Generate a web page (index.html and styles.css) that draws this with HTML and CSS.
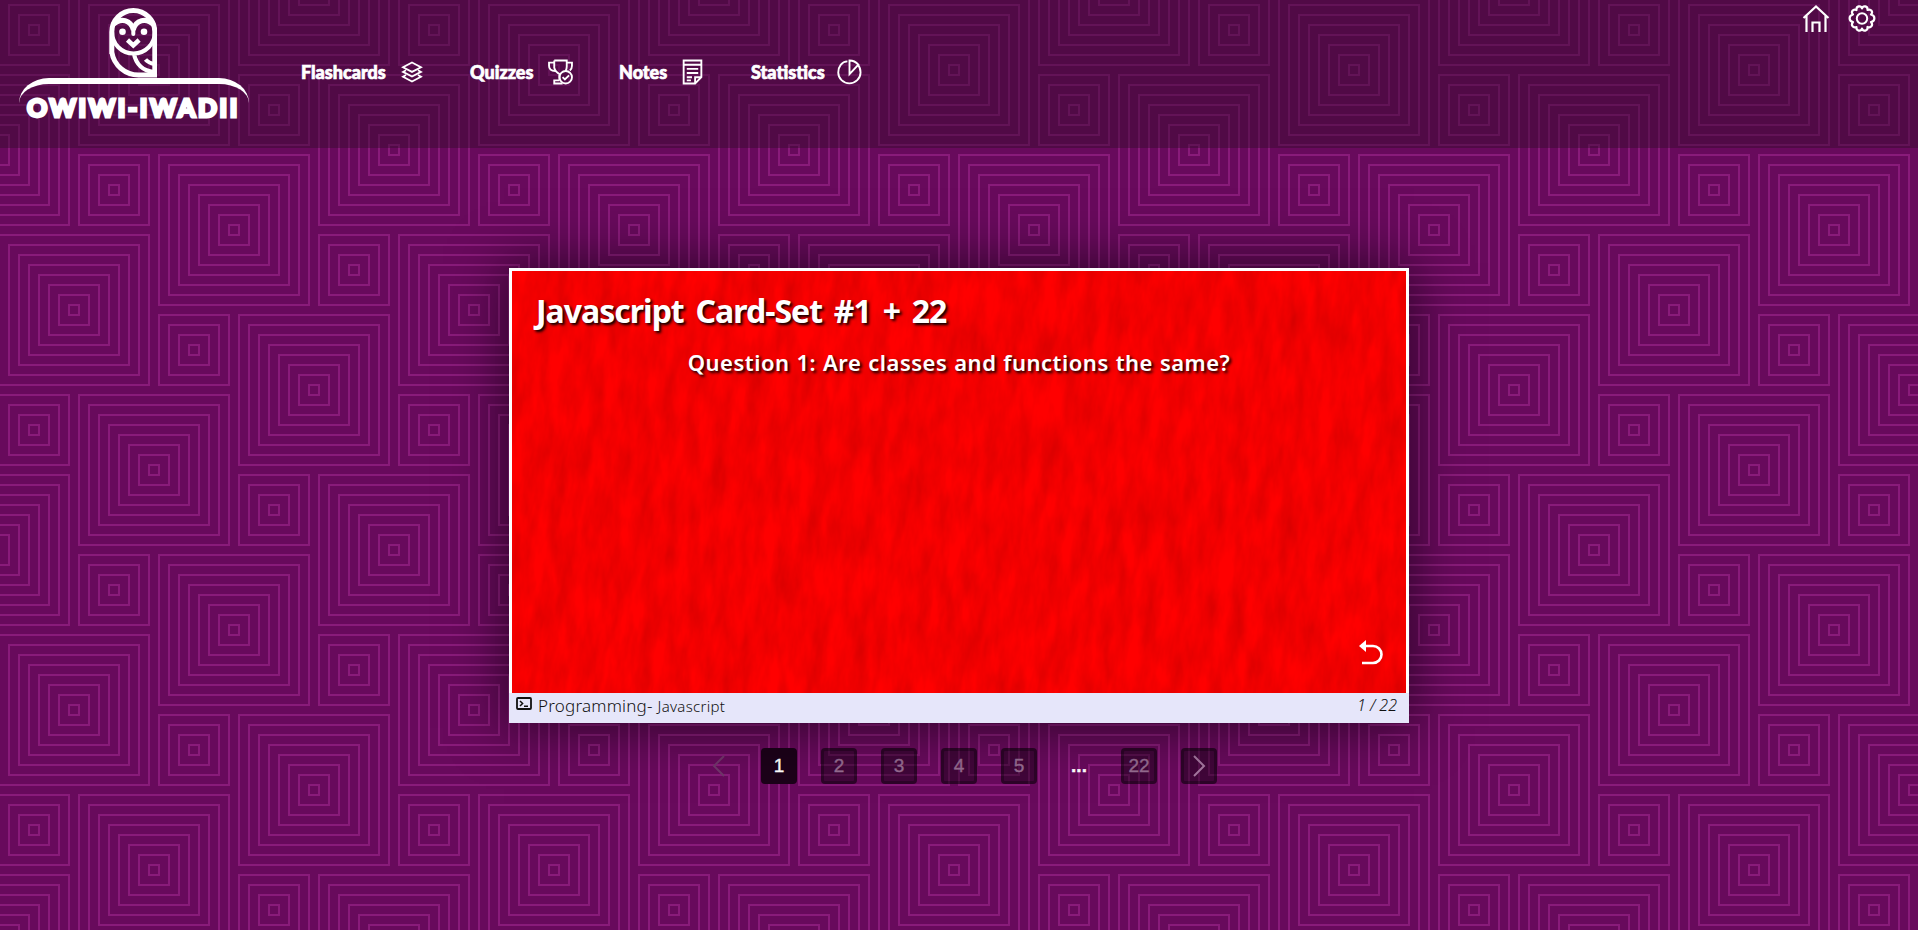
FILE: index.html
```html
<!DOCTYPE html>
<html lang="en">
<head>
<meta charset="utf-8">
<title>Owiwi-Iwadii</title>
<link rel="stylesheet" href="styles.css">
</head>
<body>
<header class="header">
  <div class="logo">
    <svg class="owl" viewBox="0 0 48 70" fill="none" stroke="#fff" stroke-width="5">
      <path d="M2.800 46V24a21.500 21.500 0 0 1 43 0v43H30A27 27 0 0 1 2.800 44V24"/>
      <path d="M3.500 17C12 9 22 12 24.300 22C26.500 12 37 9 45 17" />
      <path d="M3 24a21.500 21.500 0 0 0 43 0M25 46c2 10 9 17 20 18M36.500 51.500q3 3.500 9 4.500" stroke-width="4.200"/>
      <path d="m18.500 32 5.800 5.500 5.800-5.500" stroke-width="4.500"/>
      <path d="M24.300 18v8" stroke-width="4" stroke-linecap="round"/>
      <circle cx="13.500" cy="23.800" r="3.300" fill="#fff" stroke="none"/>
      <circle cx="35" cy="23.800" r="3.300" fill="#fff" stroke="none"/>
    </svg>
    <div class="brand">OWIWI-IWADII</div>
  </div>
  <nav class="nav">
    <a class="link"><span class="label w1">Flashcards</span>
      <svg width="24" height="24" viewBox="0 0 24 24"><path d="m12 2.500 9 4.700-9 4.700-9-4.700zM6 10.200l-3 1.700 9 4.700 9-4.700-3-1.700M6 15l-3 1.700 9 4.800 9-4.800-3-1.700"/></svg></a>
    <a class="link"><span class="label w2">Quizzes</span>
      <svg width="25" height="26" viewBox="0 0 24 24"><path d="M6 1h12v6q0 2-1 4M6 1v7q1 4 5 6v6M6 3H1v3q0 5 6 5M18 3h5v3q0 3-2 4.500M11 20H6v3h8"/><circle cx="17" cy="17" r="6"/><path d="m14 17 2.200 2.200 4-4"/></svg></a>
    <a class="link"><span class="label w3">Notes</span>
      <svg width="25" height="26" viewBox="0 0 24 24"><path d="M3.500 1h17v16l-6 6h-11zM3.500 5h17M6.500 9h11M6.500 13h11M6.500 17h5M6.500 20h4M14.500 23v-6h6"/></svg></a>
    <a class="link"><span class="label w4">Statistics</span>
      <svg width="25" height="26" viewBox="0 0 24 24"><path d="M10 1.800C4.500 2 1.200 7 1.200 12.500A10.700 10.400 0 0 0 22.600 12.500Q22.600 8 20 5M12 1v13l8.500-9q-3.500-4-8.500-4z"/></svg></a>
  </nav>
  <div class="tools">
    <svg width="28" height="28" viewBox="0 0 28 28"><path d="M1.500 13 14 1.500 26.500 13M4.500 10.500V27M23.500 10.500V27M10.500 27v-9.500h7V27" stroke-width="2.200"/></svg>
    <svg width="28" height="28" viewBox="0 0 28 28" stroke-linejoin="round"><circle cx="14" cy="13.500" r="5.200" stroke-width="2"/><path stroke-width="2.200" d="M14 3.500c1-3.500 6-2.500 5.500 1.500 3.500-1.500 6 2 3.500 4.500 4.500 1 4.500 6.500 0 7.500 2.500 3 0 6.500-3.500 5 .5 4-4.500 5-5.500 1.500-1 3.500-6 2.500-5.500-1.500-3.500 1.500-6-2-3.500-5-4.500-1-4.500-6.500 0-7.500C2.500 7 5 3.500 8.500 5 8 1 13 0 14 3.500z"/></svg>
  </div>
</header>
<main class="main">
  <article class="card">
    <div class="face">
      <svg class="fur" width="894" height="422">
        <filter id="fur" x="0" y="0" width="100%" height="100%" color-interpolation-filters="sRGB">
          <feTurbulence type="fractalNoise" baseFrequency=".07 .02" numOctaves="5" seed="21"/>
          <feColorMatrix values=".22 0 0 0 .84  0 0 0 0 0  0 0 0 0 0  0 0 0 0 1"/>
        </filter>
        <g transform="rotate(5 447 211)"><rect x="-60" y="-100" width="1014" height="622" filter="url(#fur)"/></g>
      </svg>
      <h1 class="title">Javascript Card-Set #1 + 22</h1>
      <p class="question">Question 1: Are classes and functions the same?</p>
      <svg class="flip" width="26" height="26" viewBox="0 0 26 26"><path d="M6 6h9a8.300 8.300 0 0 1 0 17H4" fill="none" stroke="#fff" stroke-width="2.600"/><path d="M1 6 8 0v12z" fill="#fff"/></svg>
    </div>
    <footer class="foot">
      <svg class="term" width="16" height="13" viewBox="0 0 16 13" fill="none" stroke="#111" stroke-width="1.800"><rect x="1" y="1" width="14" height="11" rx="1"/><path d="m4 4 2.600 2.500L4 9M8 9.300h4" stroke-width="1.500"/></svg>
      <span class="category">Programming-</span><span class="topic">Javascript</span><span class="count">1 / 22</span>
    </footer>
  </article>
  <nav class="pages">
    <span class="page off"><svg width="14" height="24" viewBox="0 0 14 24"><path d="M12 2 2 12l10 10"/></svg></span>
    <span class="page on">1</span><span class="page">2</span><span class="page">3</span><span class="page">4</span><span class="page">5</span>
    <span class="page dots">...</span><span class="page">22</span>
    <span class="page"><svg width="14" height="24" viewBox="0 0 14 24"><path d="m2 2 10 10L2 22"/></svg></span>
  </nav>
</main>
</body>
</html>
```
FILE: styles.css
```css
* { box-sizing: border-box; }
body {
  margin: 0;
  height: 930px;
  overflow: hidden;
  font-family: "Noto Sans", sans-serif;
  background: #680a5c url("data:image/svg+xml,%3Csvg xmlns='http://www.w3.org/2000/svg' xmlns:xlink='http://www.w3.org/1999/xlink' width='400' height='400'%3E%3Cdefs%3E%3Cg id='s'%3E%3Cpath d='M-5-5H5V5H-5zM-15-15H15V15H-15zM-25-25H25V25H-25zM-35-35H35V35H-35z'/%3E%3C/g%3E%3Cg id='b'%3E%3Cuse xlink:href='%23s'/%3E%3Cpath d='M-45-45H45V45H-45zM-55-55H55V55H-55zM-65-65H65V65H-65zM-75-75H75V75H-75z'/%3E%3C/g%3E%3Cg id='t'%3E%3Cuse xlink:href='%23b' x='234' y='230'/%3E%3Cuse xlink:href='%23b' x='314' y='390'/%3E%3Cuse xlink:href='%23b' x='314' y='-10'/%3E%3Cuse xlink:href='%23b' x='74' y='310'/%3E%3Cuse xlink:href='%23b' x='154' y='70'/%3E%3Cuse xlink:href='%23b' x='394' y='150'/%3E%3Cuse xlink:href='%23b' x='-6' y='150'/%3E%3Cuse xlink:href='%23b' x='474' y='310'/%3E%3Cuse xlink:href='%23b' x='154' y='470'/%3E%3Cuse xlink:href='%23s' x='114' y='190'/%3E%3Cuse xlink:href='%23s' x='354' y='270'/%3E%3Cuse xlink:href='%23s' x='194' y='350'/%3E%3Cuse xlink:href='%23s' x='34' y='30'/%3E%3Cuse xlink:href='%23s' x='34' y='430'/%3E%3Cuse xlink:href='%23s' x='434' y='30'/%3E%3Cuse xlink:href='%23s' x='434' y='430'/%3E%3Cuse xlink:href='%23s' x='274' y='110'/%3E%3C/g%3E%3C/defs%3E%3Cuse xlink:href='%23t' fill='none' stroke='%23891b7a' stroke-width='2'/%3E%3C/svg%3E");
}
.header {
  height: 148px;
  display: flex;
  align-items: flex-start;
  background: rgba(53, 10, 45, .45);
  color: #fff;
}
.logo { width: 231px; margin: 7px 0 0 18px; display: flex; flex-direction: column; align-items: center; }
.owl { width: 48px; height: 72px; margin-left: -2px; }
.brand {
  width: 230px;
  height: 40px;
  margin-top: -1px;
  border-top: 6px solid #fff;
  border-radius: 30px 30px 0 0 / 25px 25px 0 0;
  padding-top: 10px;
  text-align: center;
  font: 900 25px/26px Lato, sans-serif;
  letter-spacing: 2.600px;
  -webkit-text-stroke: 2.800px #fff;
  white-space: nowrap;
}
.nav { display: flex; gap: 46px; margin: 60px 0 0 52px; }
.link { display: flex; align-items: center; gap: 11px; height: 24px; }
.link svg, .tools svg { fill: none; stroke: #fff; stroke-width: 1.800; }
.label { font: 900 18px/24px Lato, sans-serif; white-space: nowrap; -webkit-text-stroke: .7px #fff; }
.w1 { width: 88px; } .w2 { width: 67px; } .w3 { width: 50px; } .w4 { width: 75px; }
.tools { display: flex; gap: 18px; margin: 5px 42px 0 auto; }
.main { display: flex; flex-direction: column; align-items: center; }
.card {
  position: relative;
  z-index: 0;
  width: 900px;
  margin-top: 120px;
  border: 3px solid #fff;
  border-bottom: 0;
  box-shadow: 0 0 50px 5px rgba(0, 0, 0, .55);
}
.face { position: relative; height: 422px; padding: 18px 24px; color: #fff; text-shadow: 2px 2px 3px #000; }
.fur { position: absolute; inset: 0; z-index: -1; overflow: hidden; }
.title { margin: 0; font: 700 32px/44px "Noto Sans", sans-serif; letter-spacing: -1px; word-spacing: 4.500px; white-space: nowrap; }
.question { margin: 12px 0 0; text-align: center; font: 600 22px/34px "Noto Sans", sans-serif; letter-spacing: .5px; word-spacing: .7px; white-space: nowrap; }
.flip { position: absolute; right: 22px; bottom: 27px; }
.foot {
  height: 30px;
  margin: 0 -3px;
  padding: 0 12px 0 7px;
  display: flex;
  align-items: flex-start;
  background: #e6e6fa;
  color: #111;
  line-height: 25px;
}
.term { margin: 4px 6px 0 0; }
.category { font-size: 17px; font-weight: 300; letter-spacing: .2px; }
.topic { font-size: 15px; margin-left: 5px; padding-top: 1px; font-weight: 300; letter-spacing: .3px; }
.count { margin-left: auto; font-style: italic; font-size: 16px; font-weight: 300; }
.pages { display: flex; gap: 24px; margin-top: 25px; }
.page {
  width: 36px;
  height: 36px;
  display: flex;
  align-items: center;
  justify-content: center;
  border: 3px solid rgba(0, 0, 0, .3);
  border-radius: 4px;
  background: rgba(0, 0, 0, .38);
  color: #956b90;
  font: 400 19px/30px "Liberation Sans", sans-serif;
  -webkit-text-stroke: .4px currentColor;
}
.page svg { fill: none; stroke: #a578a0; stroke-width: 2; }
.on { color: #fff; background: #1c0219; border-color: #1c0219; }
.off, .dots { background: none; border-color: transparent; color: #fff; }
.dots { font-weight: 700; }
.off svg { stroke: #70366a; }
```
